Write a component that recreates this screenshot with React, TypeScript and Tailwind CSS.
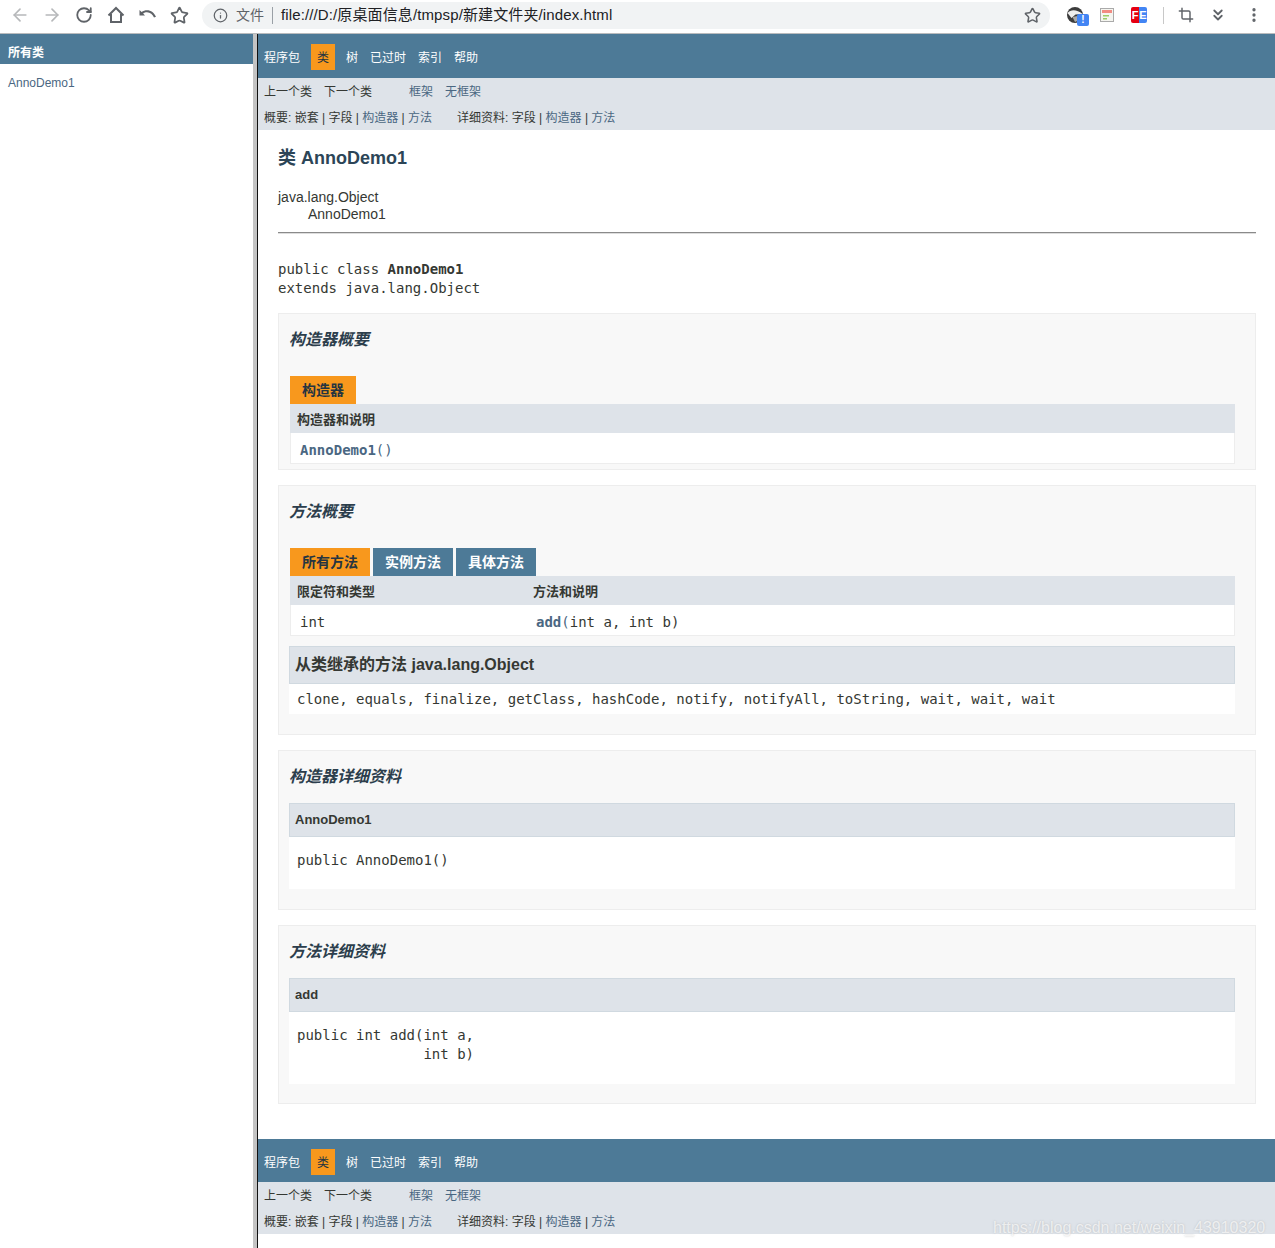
import React from "react";
import { ArrowLeft, ArrowRight, RotateCw, Star, Info, Crop, ChevronsDown, MoreVertical } from "lucide-react";

const sans = "font-['Liberation_Sans','Noto_Sans_CJK_SC',sans-serif]";
const mono = "font-['DejaVu_Sans_Mono','Noto_Sans_CJK_SC',monospace]";

const TopNav = ({ bottom }: { bottom?: boolean }) => (
  <div>
    <div className={`bg-[#4d7a97] pl-[6px] pt-[10px] text-[12px] text-white ${bottom ? "h-[43px]" : "h-[44px]"}`}>
      <div className="flex h-[26px] items-center gap-[11px]">
        <span className="pt-[2px]">程序包</span>
        <span className="flex h-[26px] w-[24px] items-center justify-center bg-[#f8981d] pt-[2px] text-[#253441]">类</span>
        <span className="pt-[2px]">树</span>
        <span className="ml-[1px] pt-[2px]">已过时</span>
        <span className="ml-[1px] pt-[2px]">索引</span>
        <span className="ml-[1px] pt-[2px]">帮助</span>
      </div>
    </div>
    <div className="h-[52px] bg-[#dee3e9] pl-[6px] text-[12px] text-[#353833]">
      <div className="flex h-[26px] items-center pt-[2px]">
        <span>上一个类</span>
        <span className="ml-[12px]">下一个类</span>
        <a className="ml-[37px] text-[#4a6782]">框架</a>
        <a className="ml-[12px] text-[#4a6782]">无框架</a>
      </div>
      <div className="flex h-[26px] items-center pt-[2px]">
        <span>概要:&nbsp;嵌套&nbsp;|&nbsp;字段&nbsp;|&nbsp;<a className="text-[#4a6782]">构造器</a>&nbsp;|&nbsp;<a className="text-[#4a6782]">方法</a></span>
        <span className="ml-[25px]">详细资料:&nbsp;字段&nbsp;|&nbsp;<a className="text-[#4a6782]">构造器</a>&nbsp;|&nbsp;<a className="text-[#4a6782]">方法</a></span>
      </div>
    </div>
  </div>
);

const Box = ({ title, className, children }: { title: string; className: string; children: React.ReactNode }) => (
  <div className={`mr-[19px] border border-[#ededed] bg-[#f8f8f8] px-[11px] ${className}`}>
    <h3 className="-ml-px pt-[16px] text-[16px] leading-[20px] font-bold italic text-[#2c3e4c]">{title}</h3>
    {children}
  </div>
);

const Tab = ({ label, active }: { label: string; active?: boolean }) => (
  <div className={`flex h-[28px] items-center px-[12px] text-[14px] font-bold ${active ? "bg-[#f8981d] text-[#253441]" : "bg-[#4d7a97] text-white"}`}>
    {label}
  </div>
);

const Detail = ({ name, children, height }: { name: string; children: React.ReactNode; height: string }) => (
  <div className="-ml-px mr-[9px] mt-[16px]">
    <div className="flex h-[34px] items-center border border-[#d0d9e0] bg-[#dee3e9] pl-[5px] text-[13px] font-bold text-[#353833]">{name}</div>
    <pre className={`bg-white pl-[8px] pt-[14px] text-[14px] leading-[19px] text-[#353833] ${mono} ${height}`}>{children}</pre>
  </div>
);

export default function App() {
  return (
    <div className={`relative h-[1248px] w-[1275px] overflow-hidden bg-white ${sans}`}>
      {/* browser toolbar */}
      <div className="flex h-[34px] items-center border-b border-[#b9bbbd] pb-[3px] text-[#5f6368]">
        <div className="flex w-[202px] items-center gap-[12px] pl-[10px]">
          <ArrowLeft size={20} className="text-[#b6b8ba]" />
          <ArrowRight size={20} className="text-[#b6b8ba]" />
          <RotateCw size={18} strokeWidth={2.4} className="ml-[1px]" />
          <svg width="20" height="20" viewBox="0 0 20 20" fill="none" stroke="currentColor" strokeWidth="2" className="ml-[1px]">
            <path d="M2.5 10.5 L10 3 L17.5 10.5" />
            <path d="M5 9 V17 H15 V9" />
          </svg>
          <svg width="20" height="20" viewBox="0 0 20 20" fill="currentColor">
            <path d="M1.5 10.5 V5 L3.6 7.1 C5.2 5.8 7 5.2 9 5.2 C13 5.2 16.4 7.8 18 11.8 L16 12.6 C14.8 9.4 12.2 7.2 9 7.2 C7.6 7.2 6.2 7.7 5.1 8.6 L7 10.5 Z" />
          </svg>
          <Star size={19} strokeWidth={2.2} />
        </div>
        <div className="flex h-[27px] w-[848px] items-center rounded-full bg-[#f1f3f4] pl-[11px]">
          <Info size={15} />
          <span className="ml-[8px] text-[14px]">文件</span>
          <span className="ml-[8px] h-[17px] w-px bg-[#9aa0a6]" />
          <span className="ml-[8px] text-[15px] tracking-[0.12px] text-[#202124]">file:///D:/原桌面信息/tmpsp/新建文件夹/index.html</span>
          <Star size={17} strokeWidth={2.2} className="ml-auto mr-[9px]" />
        </div>
        <div className="relative flex flex-1 items-center">
          <svg width="16" height="16" viewBox="0 0 16 16" className="ml-[17px]">
            <circle cx="8" cy="8" r="8" fill="#3c3c3c" />
            <path d="M0.5 6 C4 2 10 2.5 15.5 7 L8.5 7.5 L4.5 11 Z" fill="#eeeeee" />
            <path d="M5.5 10 L13 8.5 L14.5 12 L8 15 Z" fill="#a8a8a8" />
          </svg>
          <span className="absolute left-[27px] top-[8px] flex h-[12px] w-[12px] items-center justify-center rounded-[2px] bg-[#4285f4] text-[10px] font-bold leading-none text-white">!</span>
          <svg width="14" height="14" viewBox="0 0 14 14" className="ml-[17px]">
            <rect x="0.5" y="0.5" width="13" height="13" fill="#f5f5f0" stroke="#aaa" />
            <rect x="2" y="2" width="10" height="3" fill="#f28b82" />
            <rect x="3" y="7" width="6" height="1.5" fill="#9ccc65" />
            <rect x="3" y="10" width="4" height="1.5" fill="#9ccc65" />
          </svg>
          <div className="relative ml-[17px] flex h-[16px] w-[16px] overflow-hidden rounded-[2px] text-[11px] font-bold leading-[16px] text-white">
            <span className="w-[8px] bg-[#e60012] text-center">F</span>
            <span className="w-[8px] bg-[#4285f4] text-center">E</span>
          </div>
          <span className="ml-[16px] h-[17px] w-px bg-[#c8c8c8]" />
          <Crop size={16} strokeWidth={2.2} className="ml-[14px]" />
          <ChevronsDown size={18} strokeWidth={2.4} className="ml-[15px]" />
          <MoreVertical size={18} strokeWidth={2.4} className="ml-[18px]" />
        </div>
      </div>

      <div className="flex h-[1214px]">
        {/* class list frame */}
        <div className="w-[253px] shrink-0">
          <div className="flex h-[30px] items-center bg-[#4d7a97] pl-[8px] pt-[7px] text-[12px] font-bold text-white">所有类</div>
          <a className="ml-[8px] mt-[12px] block text-[12px] leading-[14px] text-[#4a6782]">AnnoDemo1</a>
        </div>
        <div className="w-[4px] shrink-0 bg-[#c4c4c4]" />
        <div className="w-px shrink-0 bg-[#111]" />

        {/* class frame */}
        <div className="min-w-0 flex-1">
          <TopNav />
          <div className="pl-[20px]">
            <h2 className="pt-[16px] text-[18px] leading-[24px] font-bold text-[#2c4557]">类 AnnoDemo1</h2>
            <div className="mt-[19px] text-[14px] leading-[17px] text-[#353833]">
              <div>java.lang.Object</div>
              <div className="pl-[30px]">AnnoDemo1</div>
            </div>
            <div className="mr-[19px] mt-[9px] h-[2px] border-t border-b border-t-[#8a8a8a] border-b-[#dddddd]" />
            <pre className={`mt-[26px] text-[14px] leading-[19px] text-[#353833] ${mono}`}>
              public class <b>AnnoDemo1</b>{"\n"}extends java.lang.Object
            </pre>

            <Box title="构造器概要" className="mt-[15px] h-[157px]">
              <div className="mt-[26px] flex"><Tab label="构造器" active /></div>
              <div className="mr-[9px] flex h-[29px] items-center bg-[#dee3e9] pl-[7px] pt-[2px] text-[13px] font-bold text-[#353833]">构造器和说明</div>
              <div className={`mr-[9px] flex h-[31px] items-center border-x border-b border-[#ededed] bg-white pl-[9px] pt-[5px] text-[14px] text-[#4a6782] ${mono}`}>
                <b>AnnoDemo1</b>()
              </div>
            </Box>

            <Box title="方法概要" className="mt-[15px] h-[250px]">
              <div className="mt-[26px] flex gap-[3px]">
                <Tab label="所有方法" active />
                <Tab label="实例方法" />
                <Tab label="具体方法" />
              </div>
              <div className="mr-[9px] flex h-[29px] items-center bg-[#dee3e9] pl-[7px] pt-[2px] text-[13px] font-bold text-[#353833]">
                <span className="w-[236px]">限定符和类型</span>
                <span>方法和说明</span>
              </div>
              <div className={`mr-[9px] flex h-[31px] items-center border-x border-b border-[#ededed] bg-white pl-[9px] pt-[5px] text-[14px] text-[#353833] ${mono}`}>
                <span className="w-[236px]">int</span>
                <span><b className="text-[#4a6782]">add</b><span className="text-[#4a6782]">(</span>int a, int b)</span>
              </div>
              <div className="-ml-px mr-[9px] mt-[10px] flex h-[38px] items-center border border-[#d0d9e0] bg-[#dee3e9] pl-[5px] text-[16px] font-bold text-[#353833]">从类继承的方法 java.lang.Object</div>
              <div className={`-ml-px mr-[9px] flex h-[30px] items-center bg-white pl-[8px] text-[14px] text-[#353833] ${mono}`}>
                clone, equals, finalize, getClass, hashCode, notify, notifyAll, toString, wait, wait, wait
              </div>
            </Box>

            <Box title="构造器详细资料" className="mt-[15px] h-[160px]">
              <Detail name="AnnoDemo1" height="h-[52px]">public AnnoDemo1()</Detail>
            </Box>

            <Box title="方法详细资料" className="mt-[15px] h-[179px]">
              <Detail name="add" height="h-[72px]">{"public int add(int a,\n               int b)"}</Detail>
            </Box>
          </div>
          <div className="mt-[35px]">
            <TopNav bottom />
          </div>
        </div>
      </div>

      <div className="absolute left-[993px] top-[1218px] text-[16px] leading-[20px] text-white/70 [text-shadow:0_0_2px_rgba(160,160,160,0.6)]">
        https://blog.csdn.net/weixin_43910320
      </div>
    </div>
  );
}
